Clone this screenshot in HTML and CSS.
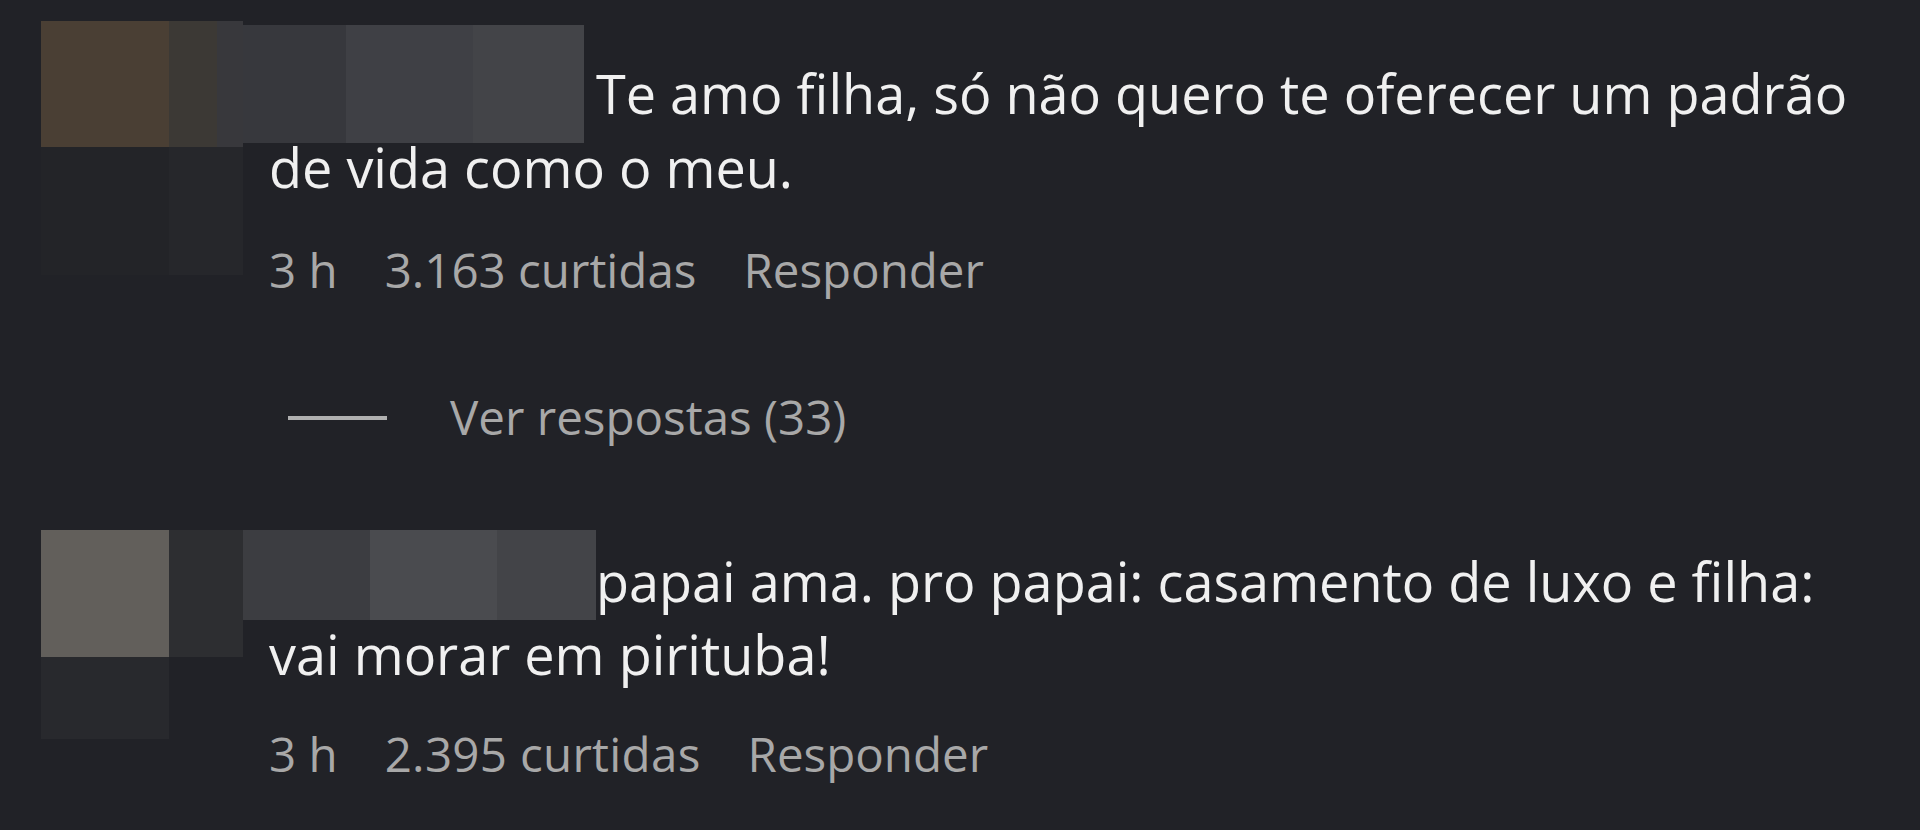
FILE: index.html
```html
<!DOCTYPE html>
<html lang="pt-BR">
<head>
<meta charset="utf-8">
<title>Comentários</title>
<link rel="stylesheet" href="styles.css">
</head>
<body>
<main class="thread">
  <article class="comment c1">
    <div class="mosaic" aria-hidden="true">
      <i class="b b1a"></i><i class="b b1b"></i><i class="b b1c"></i>
      <i class="b b1d"></i><i class="b b1e"></i><i class="b b1f"></i>
      <i class="b b1g"></i><i class="b b1h"></i>
    </div>
    <div class="content">
      <p class="text"><span class="user"></span>Te amo filha, só não quero te oferecer um padrão<br>de vida como o meu.</p>
      <div class="meta">
        <span class="time">3 h</span>
        <span class="likes">3.163 curtidas</span>
        <span class="reply">Responder</span>
      </div>
    </div>
  </article>

  <div class="replies"><span class="dash"></span><span class="replies-label">Ver respostas (33)</span></div>

  <article class="comment c2">
    <div class="mosaic" aria-hidden="true">
      <i class="b b2a"></i><i class="b b2b"></i><i class="b b2c"></i>
      <i class="b b2d"></i><i class="b b2e"></i><i class="b b2f"></i>
    </div>
    <div class="content">
      <p class="text"><span class="user"></span>papai ama. pro papai: casamento de luxo e filha:<br>vai morar em pirituba!</p>
      <div class="meta">
        <span class="time">3 h</span>
        <span class="likes wide">2.395 curtidas</span>
        <span class="reply">Responder</span>
      </div>
    </div>
  </article>
</main>
</body>
</html>
```

FILE: styles.css
```css
html, body {
  margin: 0;
  padding: 0;
  background: #212227;
}

body {
  width: 1920px;
  height: 830px;
  overflow: hidden;
  font-family: "Open Sans", "Noto Sans", sans-serif;
  color: #f0f0f0;
}

.thread {
  display: flex;
  flex-direction: column;
}

.comment {
  position: relative;
  padding-left: 269px;
}

.c1 { padding-top: 56px; }
.c2 { padding-top: 98px; }

.content {
  display: flex;
  flex-direction: column;
  width: 1640px;
}

.text {
  margin: 0;
  font-size: 54px;
  line-height: 74px;
  color: #f0f0f0;
  white-space: nowrap;
}

.c2 .text { line-height: 73px; }

.user {
  display: inline-block;
  width: 327px;
  height: 1px;
}

.meta {
  display: flex;
  gap: 47px;
  margin-top: 33px;
  font-size: 47.5px;
  line-height: 60px;
  color: #a8a8a8;
}

.c1 .meta { margin-top: 36px; }

.likes.wide { letter-spacing: 0.3px; }

.replies {
  display: flex;
  align-items: center;
  margin: 87px 0 0 288px;
  height: 60px;
  font-size: 47.5px;
  line-height: 60px;
  color: #a8a8a8;
}

.dash {
  width: 99px;
  height: 4px;
  margin-top: 2px;
  background: #b0b0b0;
  margin-right: 63px;
}

/* censor mosaic over avatar + username */
.mosaic {
  position: absolute;
  left: 41px;
  width: 560px;
  height: 260px;
}

.c1 .mosaic { top: 21px; }
.c2 .mosaic { top: 83px; }

.b {
  position: absolute;
  display: block;
}

.b1a { left: 0; top: 0; width: 128px; height: 126px; background: #4a3f34; }
.b1b { left: 128px; top: 0; width: 48px; height: 126px; background: #3c3935; }
.b1c { left: 176px; top: 0; width: 26px; height: 126px; background: #38383c; }
.b1d { left: 202px; top: 4px; width: 103px; height: 118px; background: #37383d; }
.b1e { left: 305px; top: 4px; width: 127px; height: 118px; background: #3f4045; }
.b1f { left: 432px; top: 4px; width: 111px; height: 118px; background: #434448; }
.b1g { left: 0; top: 126px; width: 128px; height: 128px; background: #232428; }
.b1h { left: 128px; top: 126px; width: 74px; height: 128px; background: #26272b; }

.b2a { left: 0; top: 0; width: 128px; height: 127px; background: #625f5b; }
.b2b { left: 128px; top: 0; width: 74px; height: 127px; background: #2d2e31; }
.b2c { left: 202px; top: 0; width: 127px; height: 90px; background: #3c3d41; }
.b2d { left: 329px; top: 0; width: 127px; height: 90px; background: #4a4b4f; }
.b2e { left: 456px; top: 0; width: 99px; height: 90px; background: #434448; }
.b2f { left: 0; top: 127px; width: 128px; height: 82px; background: #28292d; }
```
